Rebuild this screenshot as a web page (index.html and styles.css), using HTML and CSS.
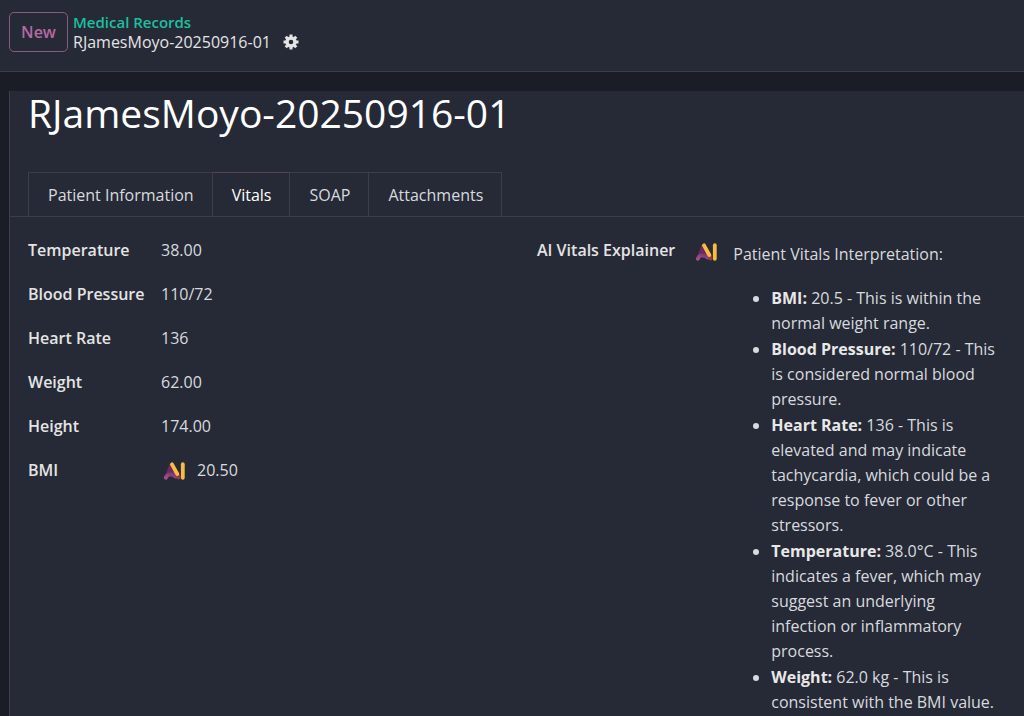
FILE: index.html
```html
<!DOCTYPE html>
<html lang="en">

<head>
    <meta charset="UTF-8">
    <meta name="viewport" content="width=device-width, initial-scale=1.0">
    <title>Medical Records</title>
    <link rel="stylesheet" href="styles.css">
</head>

<body>
    <!-- shared AI logo -->
    <svg class="defs" width="0" height="0" aria-hidden="true">
        <defs>
            <linearGradient id="ai_purple" x1="0" y1="1" x2="1" y2="0">
                <stop offset="0" stop-color="#a34d8c" />
                <stop offset="1" stop-color="#7d3a70" />
            </linearGradient>
            <symbol id="ai_logo" viewBox="0 0 22 18">
                <path d="M6.500 2Q8 .3 10 2L14.500 11 13 14 2 14.500z" fill="#6b2a5e" />
                <path d="M10 10 15 9 17.500 15Q17.800 17.500 15.500 17.500 12 17 10 10z" fill="#8a3f3c" />
                <path d="M2.800 15.800C4 12.200 8.500 11 12.500 14.500" fill="none" stroke="url(#ai_purple)" stroke-width="3.800" stroke-linecap="round" />
                <path d="M9 2.300 14.300 12" fill="none" stroke="#fbb945" stroke-width="3.800" stroke-linecap="round" />
                <path d="M19.800 2.200V15.800" stroke="#fbb945" stroke-width="3.800" stroke-linecap="round" />
            </symbol>
        </defs>
    </svg>

    <header class="control_panel">
        <button type="button" class="btn_new">New</button>
        <nav class="breadcrumb">
            <a href="#">Medical Records</a>
            <div class="current">
                <span>RJamesMoyo-20250916-01</span>
                <button type="button" class="btn_gear" aria-label="Actions">
                    <svg width="16" height="16" viewBox="0 0 16 16">
                        <g fill="none" stroke="#e4e4e4">
                            <circle cx="8" cy="8" r="4" stroke-width="3.400" />
                            <path d="M8 .5V3M8 13v2.500M.5 8H3M13 8h2.500M2.700 2.700l1.800 1.800M11.500 11.500l1.800 1.800M2.700 13.300l1.800-1.800M11.500 4.500l1.800-1.800" stroke-width="3" />
                        </g>
                    </svg>
                </button>
            </div>
        </nav>
    </header>

    <main class="sheet">
        <h1>RJamesMoyo-20250916-01</h1>

        <ul class="tabs">
            <li><a href="#">Patient Information</a></li>
            <li class="active"><a href="#vitals">Vitals</a></li>
            <li><a href="#">SOAP</a></li>
            <li><a href="#">Attachments</a></li>
        </ul>

        <section class="vitals" id="vitals">
            <dl class="fields">
                <dt>Temperature</dt>
                <dd>38.00</dd>
                <dt>Blood Pressure</dt>
                <dd>110/72</dd>
                <dt>Heart Rate</dt>
                <dd>136</dd>
                <dt>Weight</dt>
                <dd>62.00</dd>
                <dt>Height</dt>
                <dd>174.00</dd>
                <dt>BMI</dt>
                <dd>
                    <button type="button" class="btn_ai" aria-label="Compute BMI"><svg width="22" height="18"><use href="#ai_logo" /></svg></button>
                    20.50
                </dd>
            </dl>

            <div class="explainer">
                <h2>AI Vitals Explainer</h2>
                <button type="button" class="btn_ai" aria-label="Explain vitals"><svg width="22" height="18"><use href="#ai_logo" /></svg></button>
                <div class="explainer_text">
                    <p>Patient Vitals Interpretation:</p>
                    <ul>
                        <li><strong>BMI:</strong> 20.5 - This is within the normal weight range.</li>
                        <li><strong>Blood Pressure:</strong> 110/72 - This is considered normal blood pressure.</li>
                        <li><strong>Heart Rate:</strong> 136 - This is elevated and may indicate tachycardia, which could be a response to fever or other stressors.</li>
                        <li><strong>Temperature:</strong> 38.0°C - This indicates a fever, which may suggest an underlying infection or inflammatory process.</li>
                        <li><strong>Weight:</strong> 62.0 kg - This is consistent with the BMI value.</li>
                    </ul>
                </div>
            </div>
        </section>
    </main>
</body>

</html>
```
FILE: styles.css
```css
* {
    padding: 0;
    margin: 0;
    box-sizing: border-box;
}

body {
    min-height: 100vh;
    display: flex;
    flex-direction: column;
    background-color: #1b1d26;
    color: #d8dadf;
    font-family: "Segoe UI", "Open Sans", "Noto Sans", sans-serif;
    font-size: 16px;
    line-height: 25px;
}

a {
    color: inherit;
    text-decoration: none;
}

button {
    background: none;
    border: 0;
    color: inherit;
    font: inherit;
    cursor: pointer;
}

.defs {
    position: absolute;
}

/* top bar */
.control_panel {
    display: flex;
    align-items: flex-start;
    gap: 5px;
    padding: 12px 9px 19px;
    background-color: #262a36;
    border-bottom: 1px solid #3c3e4b;
}

.btn_new {
    width: 59px;
    height: 40px;
    border: 1px solid #8b5a80;
    border-radius: 5px;
    color: #b26ba3;
    font-weight: 600;
}

.breadcrumb {
    line-height: 20px;
}

.breadcrumb a {
    color: #1dbf9f;
    font-size: 15px;
    font-weight: 600;
}

.current {
    display: flex;
    align-items: center;
    gap: 12px;
    color: #e4e4e4;
}

.btn_gear {
    display: flex;
}

/* record sheet */
.sheet {
    flex: 1;
    margin: 19px 0 0 9px;
    background-color: #262a36;
    border-left: 1px solid #3c3e4b;
}

h1 {
    padding: 0 18px;
    color: #fff;
    font-size: 39px;
    font-weight: 400;
    line-height: 44px;
}

.tabs {
    display: flex;
    list-style: none;
    margin-top: 37px;
    padding: 0 18px;
    border-bottom: 1px solid #3c3e4b;
}

.tabs li {
    border: 1px solid #3c3e4b;
    border-bottom: 0;
}

.tabs li + li {
    border-left: 0;
}

.tabs a {
    display: block;
    padding: 10px 18px 8px 19px;
}

.tabs .active {
    border-top-color: #5b4257;
    color: #fff;
}

.vitals {
    display: grid;
    grid-template-columns: 1fr 1fr;
    gap: 46px;
    padding: 21px 24px 0 18px;
}

.fields {
    display: grid;
    grid-template-columns: 113px 1fr;
    column-gap: 20px;
    row-gap: 19px;
    align-content: start;
}

.fields dt,
h2 {
    color: #e4e4e4;
    font-size: 16px;
    font-weight: 600;
    white-space: nowrap;
}

.fields dd {
    display: flex;
    gap: 12px;
}

.btn_ai {
    display: flex;
    align-items: center;
    height: 28px;
}

.fields .btn_ai {
    height: 25px;
    margin-left: 2px;
}

.explainer {
    display: flex;
    align-items: flex-start;
}

.explainer .btn_ai {
    margin: 0 16px 0 20px;
}

.explainer_text {
    padding-top: 4px;
}

.explainer_text p {
    margin-bottom: 19px;
}

.explainer_text ul {
    padding-left: 38px;
}

.explainer_text li {
    margin-bottom: 1px;
}

.explainer_text strong {
    color: #e8e8e8;
    font-weight: 700;
}
```
